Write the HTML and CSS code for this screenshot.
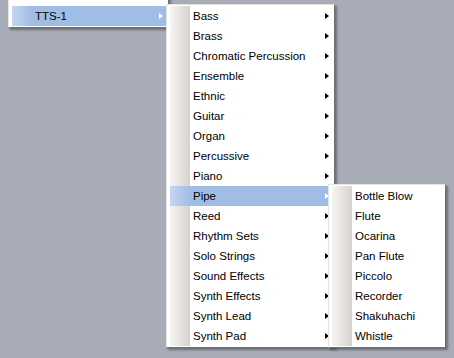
FILE: index.html
```html
<!DOCTYPE html>
<html lang="en">
<head>
  <meta charset="UTF-8">
  <title>Instrument menu</title>
  <link rel="stylesheet" href="styles.css">
</head>
<body>
  <div class="menu menu-root">
    <div class="item active"><span class="gutter"></span><span class="label">TTS-1</span><span class="arrow"></span></div>
  </div>

  <div class="menu menu-groups">
    <div class="item"><span class="gutter"></span><span class="label">Bass</span><span class="arrow"></span></div>
    <div class="item"><span class="gutter"></span><span class="label">Brass</span><span class="arrow"></span></div>
    <div class="item"><span class="gutter"></span><span class="label">Chromatic Percussion</span><span class="arrow"></span></div>
    <div class="item"><span class="gutter"></span><span class="label">Ensemble</span><span class="arrow"></span></div>
    <div class="item"><span class="gutter"></span><span class="label">Ethnic</span><span class="arrow"></span></div>
    <div class="item"><span class="gutter"></span><span class="label">Guitar</span><span class="arrow"></span></div>
    <div class="item"><span class="gutter"></span><span class="label">Organ</span><span class="arrow"></span></div>
    <div class="item"><span class="gutter"></span><span class="label">Percussive</span><span class="arrow"></span></div>
    <div class="item"><span class="gutter"></span><span class="label">Piano</span><span class="arrow"></span></div>
    <div class="item active"><span class="gutter"></span><span class="label">Pipe</span><span class="arrow"></span></div>
    <div class="item"><span class="gutter"></span><span class="label">Reed</span><span class="arrow"></span></div>
    <div class="item"><span class="gutter"></span><span class="label">Rhythm Sets</span><span class="arrow"></span></div>
    <div class="item"><span class="gutter"></span><span class="label">Solo Strings</span><span class="arrow"></span></div>
    <div class="item"><span class="gutter"></span><span class="label">Sound Effects</span><span class="arrow"></span></div>
    <div class="item"><span class="gutter"></span><span class="label">Synth Effects</span><span class="arrow"></span></div>
    <div class="item"><span class="gutter"></span><span class="label">Synth Lead</span><span class="arrow"></span></div>
    <div class="item"><span class="gutter"></span><span class="label">Synth Pad</span><span class="arrow"></span></div>
  </div>

  <div class="menu menu-pipe">
    <div class="item"><span class="gutter"></span><span class="label">Bottle Blow</span></div>
    <div class="item"><span class="gutter"></span><span class="label">Flute</span></div>
    <div class="item"><span class="gutter"></span><span class="label">Ocarina</span></div>
    <div class="item"><span class="gutter"></span><span class="label">Pan Flute</span></div>
    <div class="item"><span class="gutter"></span><span class="label">Piccolo</span></div>
    <div class="item"><span class="gutter"></span><span class="label">Recorder</span></div>
    <div class="item"><span class="gutter"></span><span class="label">Shakuhachi</span></div>
    <div class="item"><span class="gutter"></span><span class="label">Whistle</span></div>
  </div>
</body>
</html>
```

FILE: styles.css
```css
html, body {
  margin: 0;
  width: 454px;
  height: 358px;
  overflow: hidden;
  background: #a7acb6;
  font-family: 'Liberation Sans', Arial, sans-serif;
  font-size: 11.5px;
  color: #000;
}

/* popup menus sit on the desktop where they were opened */
.menu {
  position: absolute;
  background: #fff;
  border: 1px solid;
  border-color: #e6e4de #707068 #707068 #e6e4de;
  padding: 1px 2px 1px 3px;
  box-shadow: 2px 2px 2px rgba(50, 52, 60, 0.5);
}
.menu-root {
  left: 8px;
  top: -19px;
  width: 154px;
  padding-top: 24px;
}
.menu-groups {
  left: 166px;
  top: 4px;
  width: 162px;
}
.menu-pipe {
  left: 328px;
  top: 184px;
  width: 111px;
}

.item {
  display: flex;
  align-items: center;
  height: 20px;
}
.gutter {
  align-self: stretch;
  width: 20px;
  flex: none;
  background: linear-gradient(to right, #f6f5f2, #d5d2cb);
}
.label {
  flex: 1;
  padding-left: 3px;
  white-space: nowrap;
}
.arrow {
  width: 0;
  height: 0;
  margin-right: 3px;
  border-left: 4px solid #000;
  border-top: 3.5px solid transparent;
  border-bottom: 3.5px solid transparent;
}

.item.active {
  background: #a0bde6;
}
.item.active .gutter {
  background: linear-gradient(to right, #c4d6f1, #a0bde6);
}
.item.active .arrow {
  border-left-color: #fff;
}
```
